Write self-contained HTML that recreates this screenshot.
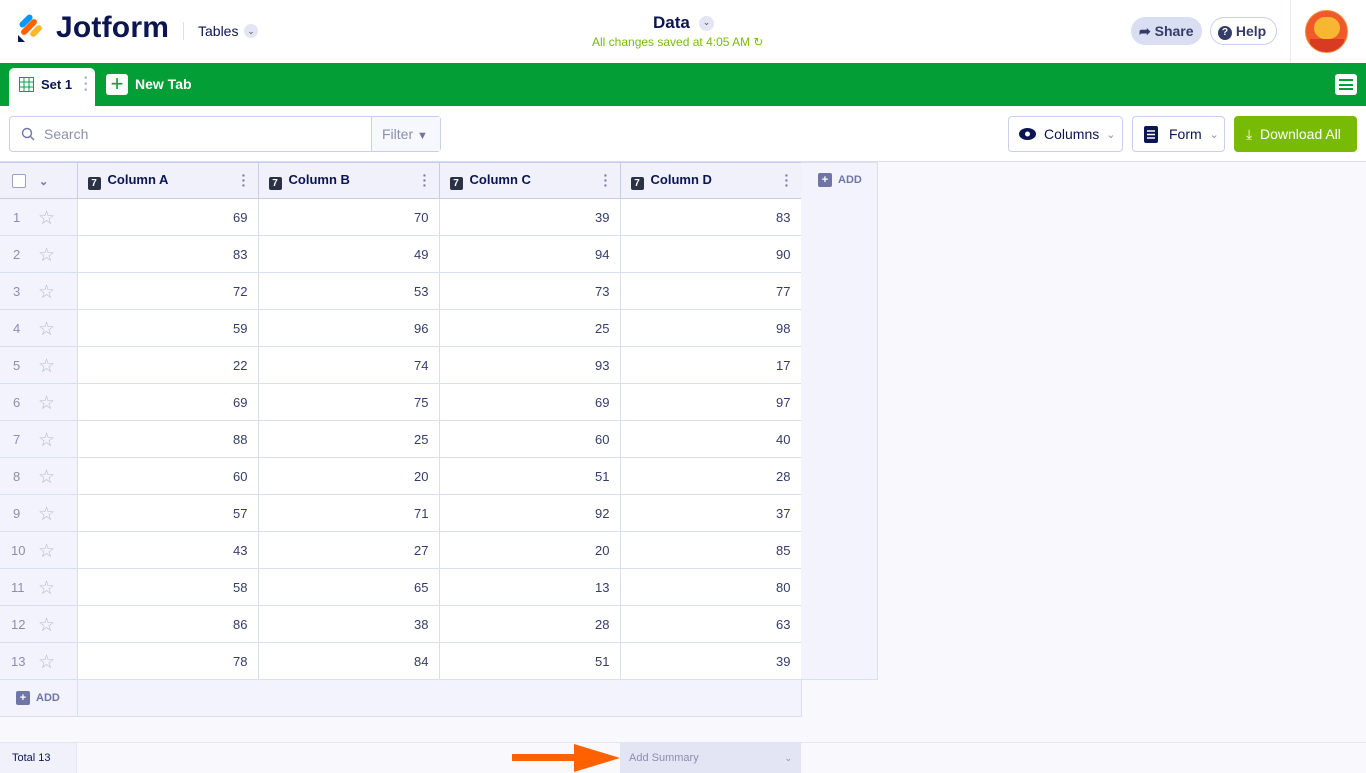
<!DOCTYPE html>
<html><head><meta charset="utf-8"><style>
*{box-sizing:border-box;margin:0;padding:0}
body{width:1366px;height:773px;overflow:hidden;background:#f8f8fd;font-family:"Liberation Sans",sans-serif;color:#0a1551;position:relative}
.abs{position:absolute}
.top{left:0;top:0;width:1366px;height:63px;background:#fff}
.green{left:0;top:63px;width:1366px;height:43px;background:#039e36}
.tool{left:0;top:106px;width:1366px;height:56px;background:#fff;border-bottom:1px solid #dadef3}
table{position:absolute;left:-1px;top:162px;border-collapse:collapse;table-layout:fixed}
td{height:37px;border:1px solid #dadef3;background:#fff;font-size:13px;text-align:right;padding-right:10px;color:#343c6a}
td.n{background:#f3f3fe;text-align:left;padding-left:14px;color:#8a8fad;border-left:none}
th{height:36px;border:1px solid #c8cceb;background:#f0f1fb;font-size:13px;font-weight:bold;text-align:left;padding-left:10px;color:#0a1551;position:relative}
.ic7{display:inline-block;width:13px;height:13px;background:#2b3245;color:#fff;font-size:10px;text-align:center;line-height:13px;border-radius:2px;margin-right:7px;vertical-align:-2px}
.dots{position:absolute;right:12px;top:10px;color:#6f76a7;font-size:14px;line-height:5px;width:4px}
.star{position:absolute;left:39px;top:8px;color:#b5b9d0;font-size:19px}
.btn{border:1px solid #c8ceed;border-radius:4px;background:#fff;height:36px;font-size:14px;display:flex;align-items:center}
</style></head><body>
<div class="abs top"></div>
<svg class="abs" style="left:17px;top:14px" width="28" height="29" viewBox="0 0 28 29">
<rect x="6" y="-1" width="6" height="16" rx="3" fill="#0099ff" transform="rotate(45 9 7)"/>
<rect x="9" y="3" width="6" height="20" rx="3" fill="#ff6100" transform="rotate(45 12 13)"/>
<rect x="16" y="10" width="6" height="14" rx="3" fill="#ffb629" transform="rotate(45 19 17)"/>
<path d="M1 21 L1 28 L8 28 Z" fill="#0a1551"/>
</svg>
<div class="abs" style="left:56px;top:11px;font-size:30px;font-weight:bold;letter-spacing:0.2px">Jotform</div>
<div class="abs" style="left:183px;top:22px;width:1px;height:18px;background:#dadef3"></div>
<div class="abs" style="left:198px;top:23px;font-size:14px">Tables</div>
<div class="abs" style="left:244px;top:24px;width:14px;height:14px;border-radius:7px;background:#e3e5f5;font-size:9px;text-align:center;line-height:14px;color:#555">&#8964;</div>
<div class="abs" style="left:653px;top:13px;font-size:17px;font-weight:bold">Data</div>
<div class="abs" style="left:699px;top:16px;width:15px;height:15px;border-radius:8px;background:#e3e5f5;font-size:9px;text-align:center;line-height:13px;color:#555">&#8964;</div>
<div class="abs" style="left:592px;top:35px;font-size:12px;color:#78bb07">All changes saved at 4:05 AM &#8635;</div>
<div class="abs" style="left:1131px;top:17px;width:71px;height:28px;border-radius:14px;background:#dadef3;font-size:14px;font-weight:bold;line-height:28px;padding-left:8px;color:#343c6a">&#10150; Share</div>
<div class="abs" style="left:1210px;top:17px;width:67px;height:28px;border-radius:14px;border:1px solid #c8ceed;background:#fff;font-size:14px;font-weight:bold;line-height:26px;padding-left:7px;color:#343c6a"><span style="display:inline-block;width:14px;height:14px;border-radius:7px;background:#343c6a;color:#fff;font-size:10px;text-align:center;line-height:14px;vertical-align:1px">?</span> Help</div>
<div class="abs" style="left:1290px;top:0;width:1px;height:63px;background:#e6e8f5"></div>
<div class="abs" style="left:1305px;top:10px;width:43px;height:43px;border-radius:22px;background:#f05a28;overflow:hidden;border:1px solid #f28a3a"><div style="position:absolute;left:8px;top:6px;width:26px;height:22px;border-radius:12px;background:#f7b733"></div><div style="position:absolute;left:4px;top:28px;width:34px;height:16px;background:#d93a22"></div></div>

<div class="abs green"></div>
<div class="abs" style="left:9px;top:68px;width:86px;height:38px;background:#fff;border-radius:5px 5px 0 0"></div>
<svg class="abs" style="left:19px;top:77px" width="15" height="15"><rect x="0.5" y="0.5" width="14" height="14" fill="none" stroke="#09a046"/><path d="M0 5h15M0 10h15M5 0v15M10 0v15" stroke="#09a046"/></svg>
<div class="abs" style="left:41px;top:77px;font-size:13px;font-weight:bold">Set 1</div>
<div class="abs" style="left:84px;top:76px;color:#b5b9d0;font-size:10px;line-height:6px">•<br>•<br>•</div>
<div class="abs" style="left:106px;top:74px;width:22px;height:21px;background:#fff;border-radius:3px;color:#039e36;font-size:22px;line-height:20px;text-align:center">+</div>
<div class="abs" style="left:135px;top:76px;font-size:14px;font-weight:bold;color:#fff">New Tab</div>
<div class="abs" style="left:1335px;top:74px;width:22px;height:21px;background:#fff;border-radius:3px"><div style="margin:5px 4px;height:11px;border-top:2px solid #039e36;border-bottom:2px solid #039e36;position:relative"><div style="position:absolute;top:2.5px;left:0;right:0;border-top:2px solid #039e36"></div></div></div>

<div class="abs tool"></div>
<div class="abs btn" style="left:9px;top:116px;width:432px;padding-left:11px;color:#8a8fad"><svg width="14" height="14"><circle cx="6" cy="6" r="4.5" stroke="#6f76a7" stroke-width="1.4" fill="none"/><path d="M9.5 9.5L13 13" stroke="#6f76a7" stroke-width="1.4"/></svg><span style="margin-left:9px">Search</span></div>
<div class="abs" style="left:371px;top:117px;width:69px;height:34px;border-left:1px solid #c8ceed;background:#f7f8fd;font-size:14px;color:#8a8fad;line-height:34px;padding-left:10px">Filter <span style="color:#6f76a7;font-size:11px">&#9660;</span></div>
<div class="abs btn" style="left:1008px;top:116px;width:115px;padding-left:10px"><svg width="17" height="12"><ellipse cx="8.5" cy="6" rx="8.5" ry="6" fill="#0a1551"/><circle cx="8.5" cy="6" r="2.5" fill="#fff"/></svg><span style="margin-left:8px">Columns</span><span style="margin-left:7px;color:#8a8fad;font-size:11px">&#8964;</span></div>
<div class="abs btn" style="left:1132px;top:116px;width:93px;padding-left:11px"><svg width="14" height="17"><rect width="14" height="17" rx="2" fill="#0a1551"/><path d="M3 5h8M3 8.5h8M3 12h8" stroke="#fff" stroke-width="1.5"/></svg><span style="margin-left:11px">Form</span><span style="margin-left:8px;color:#8a8fad;font-size:11px">&#8964;</span></div>
<div class="abs" style="left:1234px;top:116px;width:123px;height:36px;background:#78bb07;border-radius:4px;color:#fff;font-size:14px;line-height:36px;padding-left:12px">&#10515;&nbsp; Download All</div>

<table>
<colgroup><col style="width:78px"><col style="width:181px"><col style="width:181px"><col style="width:181px"><col style="width:181px"></colgroup>
<tr><th style="border-left:none;padding-left:13px"><span style="display:inline-block;width:14px;height:14px;border:1px solid #9aa0bf;border-radius:2px;background:#fff;vertical-align:-3px"></span><span style="margin-left:13px;color:#6f76a7;font-size:11px">&#8964;</span></th>
<th><span class="ic7">7</span>Column A<span class="dots">·<br>·<br>·</span></th>
<th><span class="ic7">7</span>Column B<span class="dots">·<br>·<br>·</span></th>
<th><span class="ic7">7</span>Column C<span class="dots">·<br>·<br>·</span></th>
<th><span class="ic7">7</span>Column D<span class="dots">·<br>·<br>·</span></th></tr>
<tr><td class="n" style="position:relative">1<span class="star">☆</span></td><td>69</td><td>70</td><td>39</td><td>83</td></tr>
<tr><td class="n" style="position:relative">2<span class="star">☆</span></td><td>83</td><td>49</td><td>94</td><td>90</td></tr>
<tr><td class="n" style="position:relative">3<span class="star">☆</span></td><td>72</td><td>53</td><td>73</td><td>77</td></tr>
<tr><td class="n" style="position:relative">4<span class="star">☆</span></td><td>59</td><td>96</td><td>25</td><td>98</td></tr>
<tr><td class="n" style="position:relative">5<span class="star">☆</span></td><td>22</td><td>74</td><td>93</td><td>17</td></tr>
<tr><td class="n" style="position:relative">6<span class="star">☆</span></td><td>69</td><td>75</td><td>69</td><td>97</td></tr>
<tr><td class="n" style="position:relative">7<span class="star">☆</span></td><td>88</td><td>25</td><td>60</td><td>40</td></tr>
<tr><td class="n" style="position:relative">8<span class="star">☆</span></td><td>60</td><td>20</td><td>51</td><td>28</td></tr>
<tr><td class="n" style="position:relative">9<span class="star">☆</span></td><td>57</td><td>71</td><td>92</td><td>37</td></tr>
<tr><td class="n" style="position:relative;padding-left:12px">10<span class="star">☆</span></td><td>43</td><td>27</td><td>20</td><td>85</td></tr>
<tr><td class="n" style="position:relative;padding-left:12px">11<span class="star">☆</span></td><td>58</td><td>65</td><td>13</td><td>80</td></tr>
<tr><td class="n" style="position:relative;padding-left:12px">12<span class="star">☆</span></td><td>86</td><td>38</td><td>28</td><td>63</td></tr>
<tr><td class="n" style="position:relative;padding-left:12px">13<span class="star">☆</span></td><td>78</td><td>84</td><td>51</td><td>39</td></tr>
<tr><td class="n" style="height:36px;padding-left:17px;font-size:11px;font-weight:bold;color:#6f76a7"><span style="display:inline-block;width:14px;height:14px;background:#6f76a7;color:#fff;border-radius:2px;text-align:center;line-height:14px;margin-right:6px">+</span>ADD</td><td colspan="4" style="background:#f3f3fe"></td></tr>
</table>
<div class="abs" style="left:801px;top:162px;width:77px;height:518px;background:#f3f3fe;border:1px solid #dadef3;border-left:none"></div>
<div class="abs" style="left:818px;top:173px;font-size:11px;font-weight:bold;color:#6f76a7"><span style="display:inline-block;width:14px;height:14px;background:#6f76a7;color:#fff;border-radius:2px;text-align:center;line-height:14px;margin-right:6px">+</span>ADD</div>

<div class="abs" style="left:0;top:742px;width:1366px;height:31px;border-top:1px solid #e3e5f5;background:#f8f8fd"></div>
<div class="abs" style="left:0;top:743px;width:77px;height:30px;background:#f0f1fb;border-right:1px solid #e3e5f5;font-size:11px;line-height:30px;padding-left:12px;color:#0a1551">Total 13</div>
<div class="abs" style="left:620px;top:743px;width:181px;height:30px;background:#e3e5f5;font-size:11px;line-height:30px;padding-left:9px;color:#8a8fad">Add Summary<span style="position:absolute;right:9px;font-size:9px">&#8964;</span></div>
<svg class="abs" style="left:512px;top:742px" width="110" height="31"><rect x="0" y="12" width="66" height="7" fill="#ff6100"/><path d="M62 2 L108 16 L62 30 Z" fill="#ff6100"/></svg>
</body></html>
